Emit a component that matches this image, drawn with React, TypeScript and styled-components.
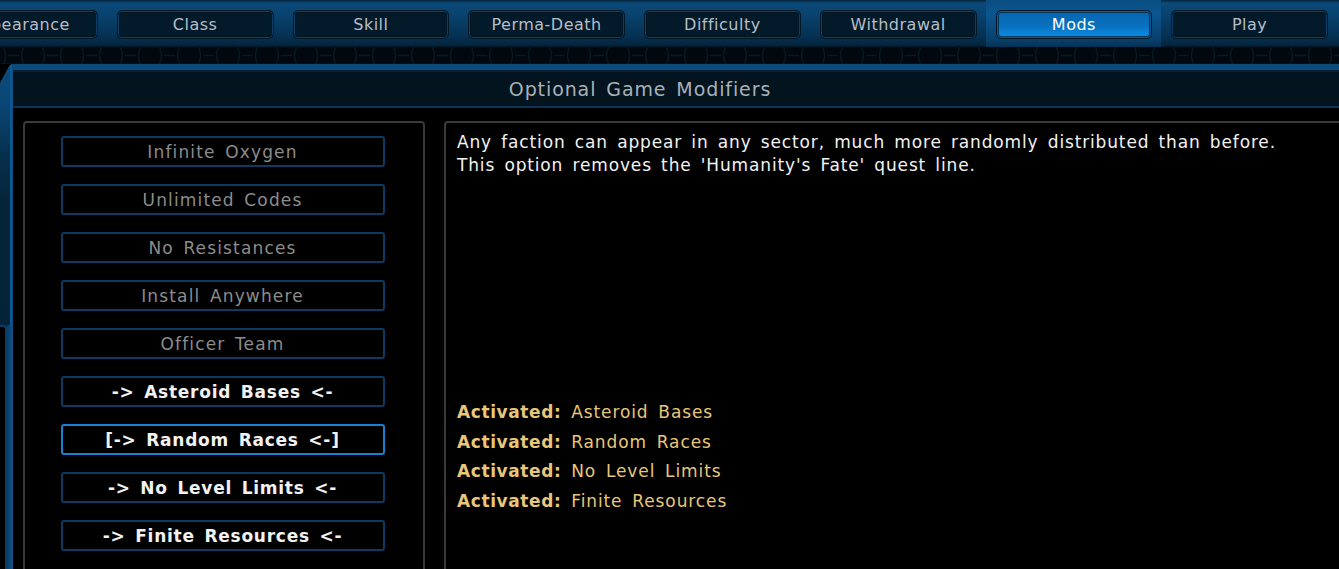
import React from "react";
import styled, { createGlobalStyle, css } from "styled-components";

const GlobalStyle = createGlobalStyle`
  html, body {
    margin: 0;
    padding: 0;
    background: #000;
    overflow: hidden;
  }
  * { box-sizing: border-box; }
`;

const FONT = `"DejaVu Sans", "Noto Sans", sans-serif`;

const Screen = styled.div`
  width: 1339px;
  height: 569px;
  overflow: hidden;
  display: flex;
  flex-direction: column;
  background: #000;
  font-family: ${FONT};
`;

/* ---------- top navigation ---------- */

const TopBar = styled.nav`
  height: 47px;
  flex: 0 0 47px;
  display: flex;
  background: linear-gradient(
    to bottom,
    #03223a 0px,
    #0b4a7a 3px,
    #09436f 14px,
    #063152 36px,
    #042640 45px,
    #021521 47px
  );
  overflow: hidden;
`;

const TabRow = styled.div`
  display: flex;
  margin-left: -69px;
`;

const TabSlot = styled.div<{ $active?: boolean }>`
  width: 175.75px;
  flex: 0 0 175.75px;
  padding: 10px 9px 0 10px;
  ${(p) =>
    p.$active &&
    css`
      background: linear-gradient(
        to bottom,
        #0a4e82 0px,
        #0b5690 14px,
        #08406b 40px,
        #063152 47px
      );
    `}
`;

const Tab = styled.button<{ $active?: boolean }>`
  width: 100%;
  height: 29px;
  padding: 0;
  border-radius: 5px;
  border: 1px solid #021626;
  box-shadow: inset 0 0 0 1px #0b3f68, inset 0 0 0 2px #021624;
  background: #031a2b;
  color: #b7bec6;
  font-family: ${FONT};
  font-size: 16px;
  letter-spacing: 0.5px;
  display: flex;
  align-items: center;
  justify-content: center;
  ${(p) =>
    p.$active &&
    css`
      color: #ffffff;
      box-shadow: inset 0 0 0 1px #0d5b96, inset 0 0 0 2px #03365c;
      background: linear-gradient(
        to bottom,
        #0766ad 0%,
        #0870bd 55%,
        #0a86dc 85%,
        #0c8fe6 100%
      );
    `}
`;

/* ---------- decorative strip under the tabs ---------- */

const Strip = styled.div`
  height: 17px;
  flex: 0 0 17px;
  background: #02080d;
  border-bottom: 1px solid #02121d;
  display: flex;
`;

const StripArt = () => (
  <svg width="1339" height="17" viewBox="0 0 1339 17">
    <defs>
      <pattern id="hexRun" width="39" height="17" patternUnits="userSpaceOnUse" x="-6">
        <path
          d="M9 -1 Q14 8.5 9 18 M14 8.5 H25 M30 -1 Q25 8.5 30 18"
          fill="none"
          stroke="#0a1823"
          strokeWidth="1.3"
        />
      </pattern>
    </defs>
    <rect width="1339" height="17" fill="url(#hexRun)" />
  </svg>
);

/* ---------- main framed panel ---------- */

const Frame = styled.section`
  flex: 1;
  display: flex;
  min-height: 0;
`;

const Rail = styled.div`
  width: 12px;
  flex: 0 0 12px;
  display: flex;
  flex-direction: column;
  clip-path: polygon(12px 0, 12px 100%, 0 100%, 0 19px, 9px 2px);
`;

const RailUpper = styled.div`
  height: 261px;
  flex: 0 0 261px;
  background:
    linear-gradient(to right, transparent 10px, #0c5890 10px, #0c5890 12px),
    linear-gradient(
      to bottom,
      #0b4b7b 0px,
      #0a4676 40px,
      #06304f 90px,
      #042539 140px,
      #03233a 261px
    );
`;

const RailLower = styled.div`
  flex: 1;
  display: flex;
  background: #03233a;
`;

const RailSlot = styled.div`
  width: 7px;
  border: 2px solid #0b3d66;
  border-left: none;
  border-bottom: none;
  border-top-right-radius: 4px;
  background: #000;
`;

const RailBar = styled.div`
  flex: 1;
  background: linear-gradient(to right, #0a3d66, #0b4a7c 70%, #0c5890);
`;

const Main = styled.div`
  flex: 1;
  display: flex;
  flex-direction: column;
  min-width: 0;
  border-top: 6px solid #0b4b7b;
  border-left: 1px solid #0c4f82;
  background: #000;
`;

const Header = styled.header`
  height: 38px;
  flex: 0 0 38px;
  border-top: 2px solid #03223a;
  border-bottom: 2px solid #0a3354;
  background: #03141f;
  display: flex;
  align-items: center;
  justify-content: center;
  color: #a9b1b9;
  font-size: 19px;
  letter-spacing: 0.9px;
  word-spacing: 3px;
  padding-right: 72px;
`;

const Body = styled.div`
  flex: 1;
  display: flex;
  gap: 19px;
  padding: 13px 0 0 10px;
  min-height: 0;
`;

const Panel = styled.div`
  border: 2px solid #3a3a3a;
  border-radius: 4px;
  height: 480px;
  background: #000;
`;

const ModList = styled(Panel)`
  width: 402px;
  flex: 0 0 402px;
  display: flex;
  flex-direction: column;
  align-items: center;
  gap: 17px;
  padding-top: 13px;
  padding-right: 3px;
`;

const ModButton = styled.button<{ $on?: boolean; $focused?: boolean }>`
  width: 324px;
  height: 31px;
  flex: 0 0 31px;
  padding: 0;
  border: 2px solid ${(p) => (p.$focused ? "#1582d8" : "#0b3b63")};
  border-radius: 3px;
  background: #000;
  color: ${(p) => (p.$on ? "#f2f2f2" : "#8c8c8c")};
  font-family: ${FONT};
  font-size: 17px;
  font-weight: ${(p) => (p.$on ? 700 : 400)};
  letter-spacing: ${(p) => (p.$on ? "0.75px" : "1.15px")};
  word-spacing: 3px;
  display: flex;
  align-items: center;
  justify-content: center;
`;

const Details = styled(Panel)`
  flex: 1;
  margin-right: -20px;
  padding: 8px 13px 0 11px;
  display: flex;
  flex-direction: column;
`;

const Description = styled.p`
  margin: 0;
  color: #f2f2f2;
  font-size: 17px;
  line-height: 23px;
  letter-spacing: 0.85px;
  word-spacing: 3px;
`;

const ActiveList = styled.ul`
  list-style: none;
  margin: 221px 0 0;
  padding: 0;
`;

const ActiveItem = styled.li`
  color: #e9c77a;
  font-size: 17px;
  line-height: 29.5px;
  letter-spacing: 0.9px;
  word-spacing: 3.5px;
`;

const ActiveLabel = styled.b`
  font-weight: 700;
  letter-spacing: 0.6px;
`;

const tabs = [
  "Appearance",
  "Class",
  "Skill",
  "Perma-Death",
  "Difficulty",
  "Withdrawal",
  "Mods",
  "Play",
];

type Mod = { name: string; on: boolean; focused?: boolean };

const mods: Mod[] = [
  { name: "Infinite Oxygen", on: false },
  { name: "Unlimited Codes", on: false },
  { name: "No Resistances", on: false },
  { name: "Install Anywhere", on: false },
  { name: "Officer Team", on: false },
  { name: "Asteroid Bases", on: true },
  { name: "Random Races", on: true, focused: true },
  { name: "No Level Limits", on: true },
  { name: "Finite Resources", on: true },
];

const modLabel = (m: Mod) => {
  if (!m.on) return m.name;
  const inner = `-> ${m.name} <-`;
  return m.focused ? `[${inner}]` : inner;
};

export default function App() {
  return (
    <>
      <GlobalStyle />
      <Screen>
        <TopBar>
          <TabRow>
            {tabs.map((t) => (
              <TabSlot key={t} $active={t === "Mods"}>
                <Tab $active={t === "Mods"}>{t}</Tab>
              </TabSlot>
            ))}
          </TabRow>
        </TopBar>
        <Strip>
          <StripArt />
        </Strip>
        <Frame>
          <Rail>
            <RailUpper />
            <RailLower>
              <RailSlot />
              <RailBar />
            </RailLower>
          </Rail>
          <Main>
            <Header>Optional Game Modifiers</Header>
            <Body>
              <ModList>
                {mods.map((m) => (
                  <ModButton key={m.name} $on={m.on} $focused={m.focused}>
                    {modLabel(m)}
                  </ModButton>
                ))}
              </ModList>
              <Details>
                <Description>
                  Any faction can appear in any sector, much more randomly distributed than before.
                  <br />
                  This option removes the 'Humanity's Fate' quest line.
                </Description>
                <ActiveList>
                  {mods
                    .filter((m) => m.on)
                    .map((m) => (
                      <ActiveItem key={m.name}>
                        <ActiveLabel>Activated:</ActiveLabel> {m.name}
                      </ActiveItem>
                    ))}
                </ActiveList>
              </Details>
            </Body>
          </Main>
        </Frame>
      </Screen>
    </>
  );
}
